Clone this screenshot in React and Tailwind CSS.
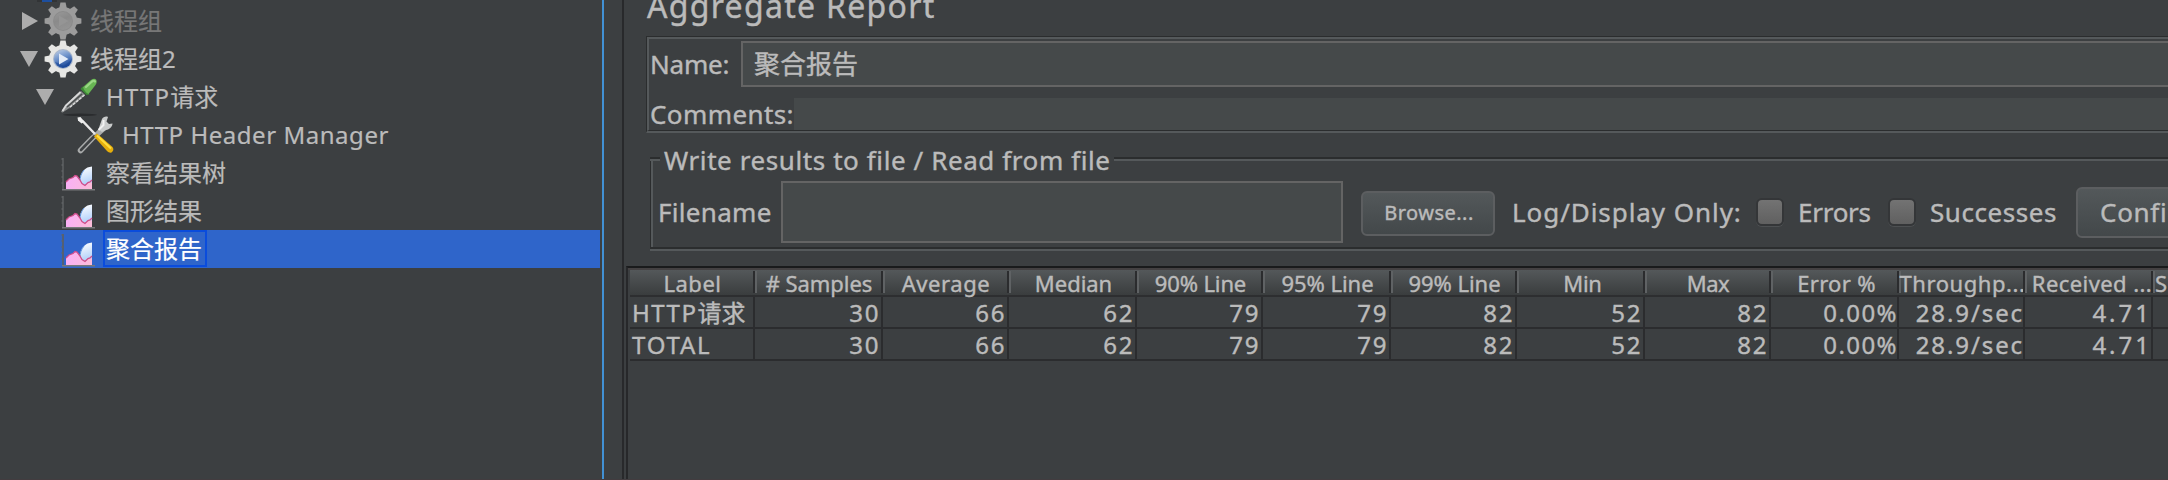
import React from 'react';

function Gear({ disabled }) {
  const body = disabled ? '#9c9c9c' : '#e6e6e4';
  const id = disabled ? 'gear-off' : 'gear-on';
  return (
    <svg width="38" height="38" viewBox="0 0 38 38" className="shrink-0">
      <defs>
        <linearGradient id={id} x1="0" y1="0" x2="0.4" y2="1">
          <stop offset="0" stopColor={disabled ? '#989898' : '#c3d2e8'} />
          <stop offset="0.5" stopColor={disabled ? '#8a8a8a' : '#6f93cb'} />
          <stop offset="1" stopColor={disabled ? '#939393' : '#1c4a9c'} />
        </linearGradient>
      </defs>
      <g fill={body}>
        {[0, 45, 90, 135].map((a) => (
          <path key={a} d="M16.4 0.6h5.2l1 5v26.800l-1 5h-5.200l-1-5V5.600z" transform={`rotate(${a} 19 19)`} />
        ))}
        <circle cx="19" cy="19" r="14" />
      </g>
      <circle cx="19" cy="19" r="10" fill={disabled ? '#8b8b8b' : '#a9b6ca'} />
      <circle cx="19" cy="19" r="9" fill={`url(#${id})`} />
      {!disabled && <path d="M11 22a9 9 0 0 0 16 0l1-3-2 2-6 5-6-3z" fill="#1d4a98" opacity="0.6" />}
      <path d="M15 13.500L24.500 19 15 24.500z" fill={disabled ? '#959595' : '#e3ebf7'} />
    </svg>
  );
}

function Dropper() {
  return (
    <svg width="38" height="38" viewBox="0 0 38 38" className="shrink-0">
      <ellipse cx="20" cy="36.800" rx="17" ry="1.200" fill="#2a2c2e" />
      <path d="M21 13L5 27l-4 7 1.500 0.500L8 31 25 17z" fill="#8d8f8f" />
      <path d="M20.500 14L6 27.500l-3.500 5.500" stroke="#d9d9d9" strokeWidth="1.800" fill="none" />
      <path d="M24.500 17L9 30" stroke="#dcdcdc" strokeWidth="1.500" fill="none" strokeDasharray="3 1" />
      <path d="M22 16L7 29" stroke="#4c4f50" strokeWidth="1.600" fill="none" />
      <path d="M22.500 8.500l7 8-3 0.500-6-6z" fill="#3d8a35" />
      <path d="M23 9l8-7c2-1.500 4-1.600 5-0.500s1 3.500-0.500 5.500l-7 9c-2-1-5-4-5.500-7z" fill="#67b553" />
      <path d="M26 9l6-5.500c1.500-1 2.500-1 3 0" stroke="#9ad785" strokeWidth="2.200" fill="none" strokeLinecap="round" />
    </svg>
  );
}

function Tools() {
  return (
    <svg width="38" height="38" viewBox="0 0 38 38" className="shrink-0">
      <path d="M4.500 34.500L16 22.500l6-5 6-5.500" stroke="#a9abab" strokeWidth="5.500" fill="none" strokeLinecap="round" />
      <path d="M5 34L18 20.500" stroke="#3f4244" strokeWidth="2.600" fill="none" strokeLinecap="round" />
      <path d="M26 3c1-2 4-3 6-2l-1.500 4.500 2.500 2.500 3.500-0.500c0 3-3 6-6.500 6.500l-4 2-3.500-3z" fill="#c9cbcb" />
      <path d="M27.500 4v5l-5 5" stroke="#f2f2f2" strokeWidth="2" fill="none" />
      <path d="M3 3l4 2.500L19 18" stroke="#e8e8e8" strokeWidth="2.400" fill="none" />
      <path d="M1.500 1.500l3-0.500 4 5-3 1.500-3.500-3z" fill="#ededed" />
      <path d="M18 20.500l3-3L36.500 31c1.500 2 1 4-1 5.500-1.500 0.500-3 0-4.500-1.500z" fill="#e5ae0c" />
      <path d="M21 19.500L35 32.500" stroke="#ffdc3c" strokeWidth="2.200" fill="none" />
    </svg>
  );
}

function Chart() {
  return (
    <svg width="38" height="38" viewBox="0 0 38 38" className="shrink-0">
      <defs>
        <linearGradient id="chart-blue" x1="0.300" y1="0" x2="0.500" y2="1">
          <stop offset="0" stopColor="#ffffff" />
          <stop offset="1" stopColor="#a3c8fa" />
        </linearGradient>
        <linearGradient id="chart-pink" x1="0" y1="0.500" x2="1" y2="0.600">
          <stop offset="0" stopColor="#f9b0f6" />
          <stop offset="1" stopColor="#fbbcd9" />
        </linearGradient>
      </defs>
      <path d="M3 4v32" stroke="#5c5f61" strokeWidth="1.600" />
      <path d="M1.500 5h1.500M1.500 11h1.500M1.500 17h1.500M1.500 23h1.500M1.500 29h1.500" stroke="#606365" strokeWidth="1.500" />
      <path d="M2 35.700h33" stroke="#77797b" strokeWidth="1.500" />
      <path d="M20 31.500c-1-6 0-11 4-15.500 2-2 4.500-3.200 8-3.500v19l-7 2z" fill="url(#chart-blue)" />
      <path d="M20 27.500c0-4 1-8 4-11.500" stroke="#5b93e0" strokeWidth="1" fill="none" />
      <path d="M6 35v-7.500l3-2.500 4-1.500 2-2 2 0.500 3 4 2 3.500 3 1.500 2-1.500 2-1.500 3 0.500V35z" fill="url(#chart-pink)" />
      <path d="M6 28l3-3 4-1.500 2-2 2 0.500 3 4 2 3.500 3 2 3-3 2-0.500 2-2" stroke="#cf4d8a" strokeWidth="1.300" fill="none" />
    </svg>
  );
}

function Arrow({ open }) {
  return (
    <svg width="18" height="18" viewBox="0 0 18 18" className="mr-1.5 shrink-0">
      <path d={open ? 'M0 1h18L9 17z' : 'M2 0v18l16-9z'} fill="#adadad" />
    </svg>
  );
}

function TreeRow({ indent, arrow, icon, selected, dim, children }) {
  return (
    <div className={`flex h-[38px] w-[600px] items-center ${indent} ${selected ? 'bg-[#2f65ca]' : ''}`}>
      {arrow}
      {icon}
      <span
        className={`ml-[5px] h-[37px] self-start whitespace-nowrap border-2 pr-[3px] pl-px text-[24px] leading-[34px] ${
          selected ? 'border-[#0a4cdc] text-white' : dim ? 'border-transparent text-[#777777]' : 'border-transparent'
        }`}
      >
        {children}
      </span>
    </div>
  );
}

const columns = [
  { w: 'w-[125px]', head: 'Label', ls: 'justify-center tracking-[0.54px]' },
  { w: 'w-[128px]', head: '# Samples', ls: 'justify-center tracking-[-0.07px]', v: '30' },
  { w: 'w-[126px]', head: 'Average', ls: 'justify-center tracking-[0.56px]', v: '66' },
  { w: 'w-[128px]', head: 'Median', ls: 'justify-center tracking-[-0.04px] pl-px', v: '62' },
  { w: 'w-[126px]', head: '90% Line', ls: 'justify-center tracking-[-0.14px] pl-px', v: '79' },
  { w: 'w-[128px]', head: '95% Line', ls: 'justify-center tracking-[-0.04px] pl-px', v: '79' },
  { w: 'w-[126px]', head: '99% Line', ls: 'justify-center tracking-[-0.04px] pl-px', v: '82' },
  { w: 'w-[128px]', head: 'Min', ls: 'justify-center tracking-[-0.32px] pl-[3px]', v: '52' },
  { w: 'w-[126px]', head: 'Max', ls: 'justify-center tracking-[-0.4px]', v: '82' },
  { w: 'w-[128px]', head: 'Error %', ls: 'justify-center tracking-[0.32px] pl-[3px]', v: '0.00%', cell: 'tracking-[1.44px] -mr-px' },
  { w: 'w-[126px]', head: 'Throughp...', ls: 'justify-center tracking-[0.56px] pl-px', v: '28.9/sec', cell: 'tracking-[1.9px] -mr-px' },
  { w: 'w-[128px]', head: 'Received ...', ls: 'justify-center tracking-[0.42px] pl-1.5', v: '4.71', cell: 'tracking-[3px] -mr-px' },
  { w: 'w-[126px]', head: 'Sent KB/...', ls: 'justify-start tracking-[0.4px]', v: '3.33' },
];

function TableRow({ label }) {
  return (
    <div className="flex h-8 border-b-2 border-[#2b2c2e]">
      {columns.map((c, i) => (
        <div
          key={c.head}
          className={`flex h-[30px] shrink-0 whitespace-nowrap border-r-2 border-[#2b2c2e] text-[24px] leading-[32px] ${c.w} ${
            i === 0 ? 'justify-start' : 'justify-end'
          }`}
        >
          {i === 0 ? label : <span className={c.cell || 'tracking-[1.6px] mr-px'}>{c.v}</span>}
        </div>
      ))}
    </div>
  );
}

function Checkbox() {
  return (
    <span className="h-7 w-7 shrink-0 rounded-[6px] border-2 border-[#343638] bg-linear-to-b from-[#737373] to-[#606060] shadow-[0_1px_0_#4d5052]" />
  );
}

export default function App() {
  return (
    <div className="flex h-[480px] w-full overflow-hidden border-b border-[#423c3f] bg-[#3c3f41] font-['Noto_Sans','Noto_Sans_CJK_SC',sans-serif] text-[#bbbbbb]">
      <div className="w-[602px] shrink-0 [-webkit-text-stroke:0.2px_currentColor]">
        <div className="ml-[37px] flex h-0.5 w-5 justify-center bg-[#323436]">
          <span className="h-0.5 w-2.5 bg-[#1d4f9f]" />
        </div>
        <TreeRow indent="pl-5" arrow={<Arrow />} icon={<Gear disabled />} dim>线程组</TreeRow>
        <TreeRow indent="pl-5" arrow={<Arrow open />} icon={<Gear />}>线程组2</TreeRow>
        <TreeRow indent="pl-9" arrow={<Arrow open />} icon={<Dropper />}>
          <span className="tracking-[1.2px]">HTTP</span>请求
        </TreeRow>
        <TreeRow indent="pl-[76px]" icon={<Tools />}>
          <span className="tracking-[0.54px]">HTTP Header Manager</span>
        </TreeRow>
        <TreeRow indent="pl-[60px]" icon={<Chart />}>察看结果树</TreeRow>
        <TreeRow indent="pl-[60px]" icon={<Chart />}>图形结果</TreeRow>
        <TreeRow indent="pl-[60px]" icon={<Chart />} selected>聚合报告</TreeRow>
      </div>

      <div className="mr-[18px] w-0.5 shrink-0 bg-[#4291d4]" />
      <div className="w-0.5 shrink-0 bg-[#28292b]" />

      <div className="flex min-w-0 flex-1 flex-col overflow-hidden [-webkit-text-stroke:0.4px_currentColor]">
        <div className="ml-[23px] h-9 shrink-0 whitespace-nowrap text-[32px] leading-[12px] tracking-[1.3px]">Aggregate Report</div>

        <div className="ml-[22px] h-[97px] shrink-0 border-t border-l border-b-2 border-t-[#2b2d2e] border-l-[#2b2d2e] border-b-[#55595b]">
          <div className="flex h-[94px] flex-col border-t-2 border-l-2 border-b border-t-[#55595b] border-l-[#55595b] border-b-[#2b2d2e] pt-0.5 pl-px text-[26px] whitespace-nowrap">
            <div className="flex h-[46px] shrink-0 items-center">
              <span className="w-[91px] shrink-0 tracking-[-0.18px]">Name:</span>
              <div className="h-[46px] flex-1 border-y-2 border-l-2 border-[#646464] bg-[#45494a] pl-[11px] leading-[42px]">聚合报告</div>
            </div>
            <div className="mt-[11px] flex h-8 shrink-0 items-center">
              <span className="w-[144px] shrink-0 tracking-[0.4px]">Comments:</span>
              <div className="h-8 flex-1 bg-[#45494a]" />
            </div>
          </div>
        </div>

        <div className="mt-6 ml-[26px] shrink-0 whitespace-nowrap text-[26px]">
          <div className="flex h-1">
            <div className="w-2.5 border-t-2 border-b-2 border-t-[#2b2d2e] border-b-[#55595b]" />
            <div className="h-1 w-[454px] pl-1 leading-[6px] tracking-[0.59px]">Write results to file / Read from file</div>
            <div className="flex-1 border-t-2 border-b-2 border-t-[#2b2d2e] border-b-[#55595b]" />
          </div>
          <div className="h-[90px] border-b-2 border-[#55595b]">
            <div className="h-[88px] border-l border-b-2 border-[#2b2d2e]">
              <div className="flex h-[86px] items-center border-l-2 border-[#55595b] pt-4 pl-[5px]">
                <span className="w-[123px] shrink-0 tracking-[0.3px]">Filename</span>
                <div className="h-[62px] w-[562px] shrink-0 border-2 border-[#646464] bg-[#45494a]" />
                <div className="relative top-px ml-[18px] flex h-[45px] w-[134px] shrink-0 items-center justify-center rounded-[6px] border-2 border-[#5c5e60] bg-linear-to-b from-[#53585a] to-[#43484a] pb-px pl-0.5 text-[20px] leading-[36px] tracking-[0.49px]">Browse...</div>
                <span className="ml-[17px] w-[244px] shrink-0 tracking-[0.94px]">Log/Display Only:</span>
                <Checkbox />
                <span className="ml-3.5 w-[90px] shrink-0 tracking-[-0.26px]">Errors</span>
                <Checkbox />
                <span className="ml-3.5 w-[146px] shrink-0 tracking-[0.56px]">Successes</span>
                <div className="h-[51px] w-[160px] shrink-0 rounded-[6px] border-2 border-[#5c5e60] bg-linear-to-b from-[#53585a] to-[#43484a] pl-[22px] leading-[46px] tracking-[0.7px]">Configure</div>
              </div>
            </div>
          </div>
        </div>

        <div className="mt-[15px] ml-0.5 flex-1 overflow-hidden border-t-2 border-l-2 border-t-[#1a1b1c] border-l-[#27282a]">
          <div className="h-0.5 bg-[#444142]" />
          <div className="pl-0.5">
            <div className="flex h-[27px] border-b-2 border-[#2d2e30]">
              {columns.map((c, i) => (
                <div key={c.head} className={`flex h-[25px] shrink-0 bg-linear-to-b from-[#54585a] to-[#3a3d3e] ${c.w}`}>
                  <span className={`mt-px h-[22px] w-0.5 shrink-0 ${i === 0 ? '' : 'bg-[#5f6264]'}`} />
                  <span className={`flex min-w-0 flex-1 whitespace-nowrap text-[22px] leading-[26px] ${c.ls}`}>{c.head}</span>
                  <span className="mt-px h-[22px] w-0.5 shrink-0 bg-[#2b2c2e]" />
                </div>
              ))}
            </div>
            <TableRow label={<span className="pl-0.5 tracking-[1.5px]">HTTP<span className="tracking-normal">请求</span></span>} />
            <TableRow label={<span className="pl-0.5 tracking-[1.8px]">TOTAL</span>} />
          </div>
        </div>
      </div>
    </div>
  );
}
